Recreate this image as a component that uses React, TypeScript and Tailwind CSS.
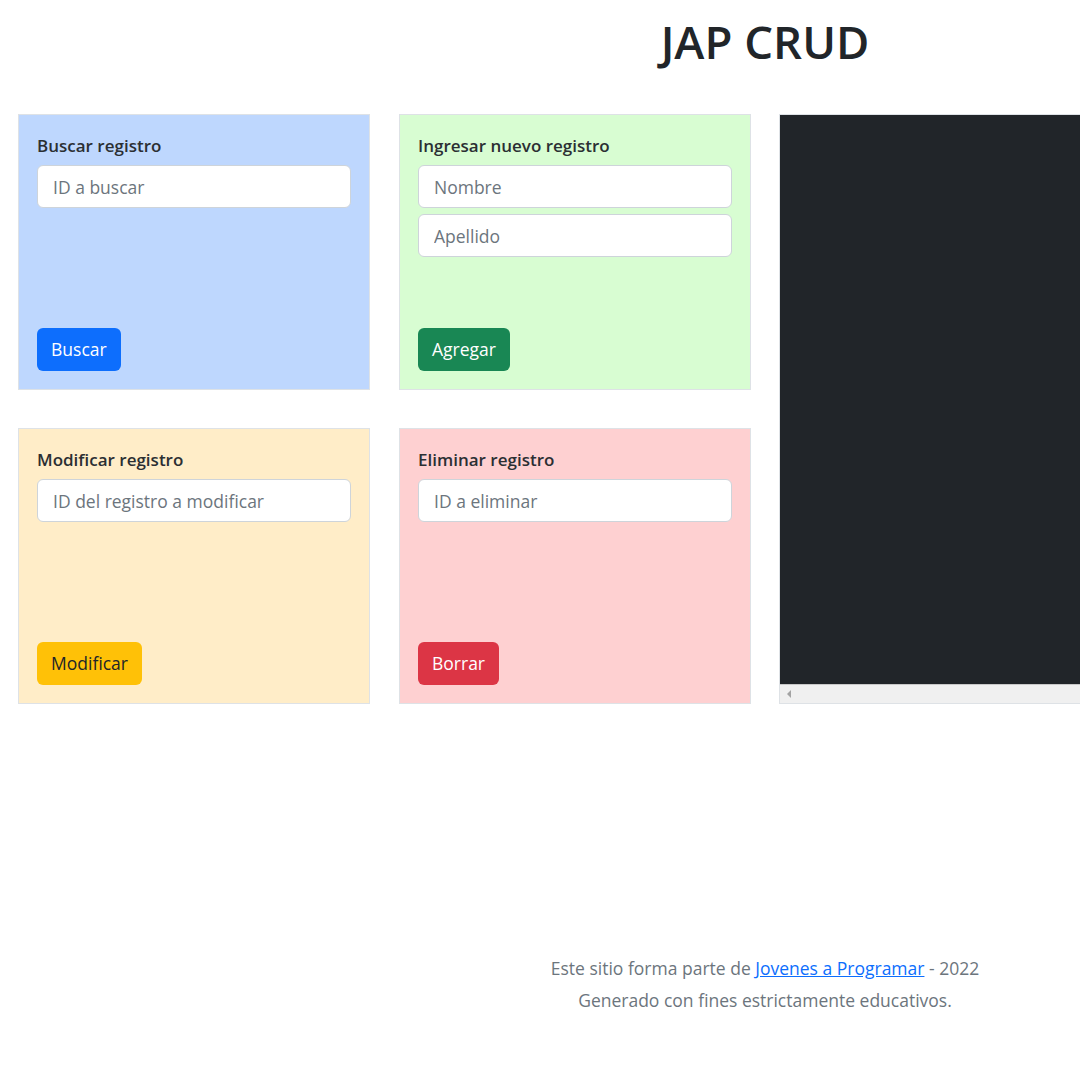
import React from "react";

const font = { fontFamily: '"Open Sans", "Noto Sans", sans-serif' };

type CardProps = {
  title: string;
  bg: string;
  placeholders: string[];
  button: string;
  btnClass: string;
};

function Card({ title, bg, placeholders, button, btnClass }: CardProps) {
  return (
    <div className={`flex h-[276px] w-[352px] flex-col justify-between border border-[#dee2e6] px-[18px] pt-[18px] pb-[18px] ${bg}`}>
      <div>
        <h5 className="mb-[7px] text-[17px] leading-[25px] font-semibold text-[#2b2f33]">{title}</h5>
        <div className="flex flex-col gap-[6px]">
          {placeholders.map((p) => (
            <input
              key={p}
              placeholder={p}
              className="h-[43px] w-full rounded-[6px] border border-[#ced4da] bg-white px-[15px] text-[17.5px] text-[#212529] outline-none placeholder:text-[#6c757d]"
            />
          ))}
        </div>
      </div>
      <div>
        <button className={`h-[43px] rounded-[6px] px-[14px] text-[17.5px] ${btnClass}`}>{button}</button>
      </div>
    </div>
  );
}

export default function App() {
  return (
    <div className="h-[1080px] w-full overflow-hidden bg-white" style={font}>
      <div className="w-[1530px]">
        <h1 className="pt-[12px] text-center text-[45.5px] leading-[58px] font-semibold text-[#212529]">JAP CRUD</h1>

        <div className="mt-[44px] flex gap-[28px] px-[18px]">
          <div className="grid grid-cols-2 gap-x-[29px] gap-y-[38px]">
            <Card
              title="Buscar registro"
              bg="bg-[#bed7fe]"
              placeholders={["ID a buscar"]}
              button="Buscar"
              btnClass="bg-[#0d6efd] text-white"
            />
            <Card
              title="Ingresar nuevo registro"
              bg="bg-[#d8fdd2]"
              placeholders={["Nombre", "Apellido"]}
              button="Agregar"
              btnClass="bg-[#198754] text-white"
            />
            <Card
              title="Modificar registro"
              bg="bg-[#ffedc8]"
              placeholders={["ID del registro a modificar"]}
              button="Modificar"
              btnClass="bg-[#ffc107] text-[#212529]"
            />
            <Card
              title="Eliminar registro"
              bg="bg-[#fed0d1]"
              placeholders={["ID a eliminar"]}
              button="Borrar"
              btnClass="bg-[#dc3545] text-white"
            />
          </div>

          {/* results panel */}
          <div className="flex h-[590px] flex-1 flex-col border border-[#dee2e6]">
            <div className="flex-1 bg-[#212529]" />
            <div className="flex h-[19px] items-center border-t border-[#c8c8c8] bg-[#f0f0f0] pl-[6px]">
              <svg width="6" height="8" viewBox="0 0 6 8">
                <path d="M5 0 L1 4 L5 8 Z" fill="#a3a3a3" />
              </svg>
            </div>
          </div>
        </div>

        <footer className="mt-[248px] text-center text-[17.5px] leading-[32px] text-[#6c757d]">
          <p>
            Este sitio forma parte de{" "}
            <a href="#" className="text-[#0d6efd] underline">
              Jovenes a Programar
            </a>{" "}
            - 2022
          </p>
          <p>Generado con fines estrictamente educativos.</p>
        </footer>
      </div>
    </div>
  );
}
